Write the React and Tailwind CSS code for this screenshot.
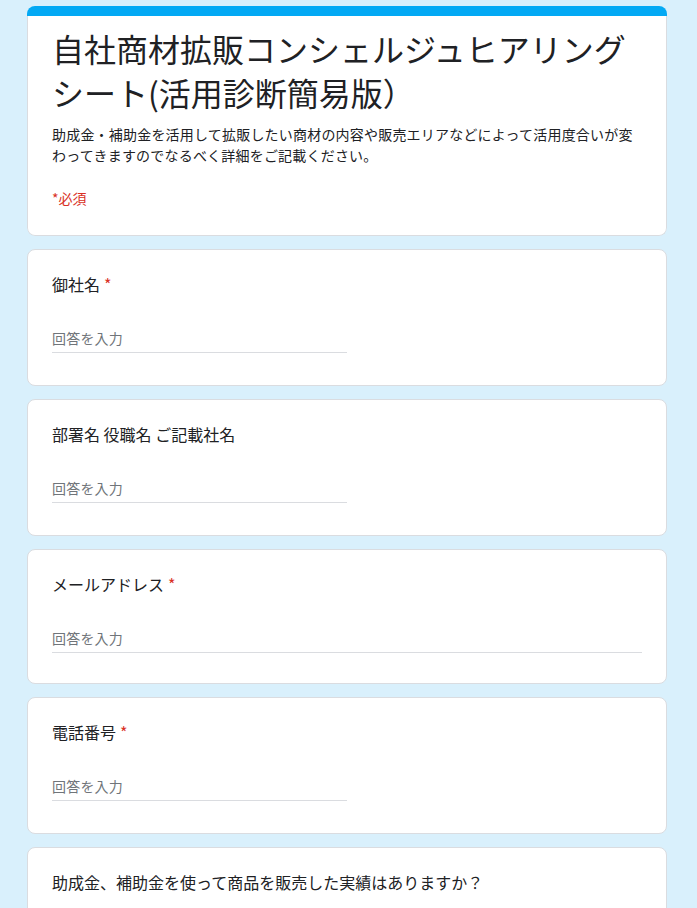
const questions = [
  { title: "御社名", required: true, wide: false },
  { title: "部署名 役職名 ご記載社名", required: false, wide: false },
  { title: "メールアドレス", required: true, wide: true },
  { title: "電話番号", required: true, wide: false },
];

function Question({ title, required, wide }) {
  return (
    <div className={`bg-white border border-[#dadce0] rounded-lg px-6 pt-[22px] ${wide ? "pb-[30px]" : "pb-[32px]"}`}>
      <div className="text-[16px] leading-[24px] text-[#202124]">
        {title}
        {required && <span className="ml-1 text-[#d93025]">*</span>}
      </div>
      <div className={`mt-[32px] ${wide ? "w-full" : "w-1/2"} border-b border-[#dadce0] pb-[4px]`}>
        <div className="text-[14px] leading-[20px] text-[#70757a] tracking-[0.2px]">回答を入力</div>
      </div>
    </div>
  );
}

export default function App() {
  return (
    <div className="min-h-screen bg-[#d9f0fc] font-['Noto_Sans_CJK_JP',sans-serif] pt-[6px] pb-10">
      <div className="w-[640px] ml-[27px] flex flex-col gap-[13px]">
        <div className="rounded-lg overflow-hidden">
          <div className="h-[10px] bg-[#03a9f4]" />
          <div className="bg-white border-x border-b border-[#dadce0] rounded-b-lg px-6 pt-[10px] pb-[26px]">
            <h1 className="text-[32px] leading-[44px] text-[#202124]">
              自社商材拡販コンシェルジュヒアリングシート(活用診断簡易版）
            </h1>
            <p className="mt-[10px] text-[14px] leading-[21px] tracking-[0.2px] text-[#202124]">
              助成金・補助金を活用して拡販したい商材の内容や販売エリアなどによって活用度合いが変わってきますのでなるべく詳細をご記載ください。
            </p>
            <p className="mt-[22px] text-[14px] leading-[21px] text-[#d93025]">*必須</p>
          </div>
        </div>

        {questions.map((q) => (
          <Question key={q.title} {...q} />
        ))}

        <div className="bg-white border border-[#dadce0] rounded-lg px-6 pt-[22px] pb-6">
          <div className="text-[16px] leading-[24px] text-[#202124]">
            助成金、補助金を使って商品を販売した実績はありますか？
          </div>
          <div className="mt-10 flex flex-col gap-4">
            {["はい", "いいえ"].map((o) => (
              <label key={o} className="flex items-center gap-3 text-[14px] text-[#202124]">
                <span className="w-5 h-5 rounded-full border-2 border-[#5f6368]" />
                {o}
              </label>
            ))}
          </div>
        </div>
      </div>
    </div>
  );
}
